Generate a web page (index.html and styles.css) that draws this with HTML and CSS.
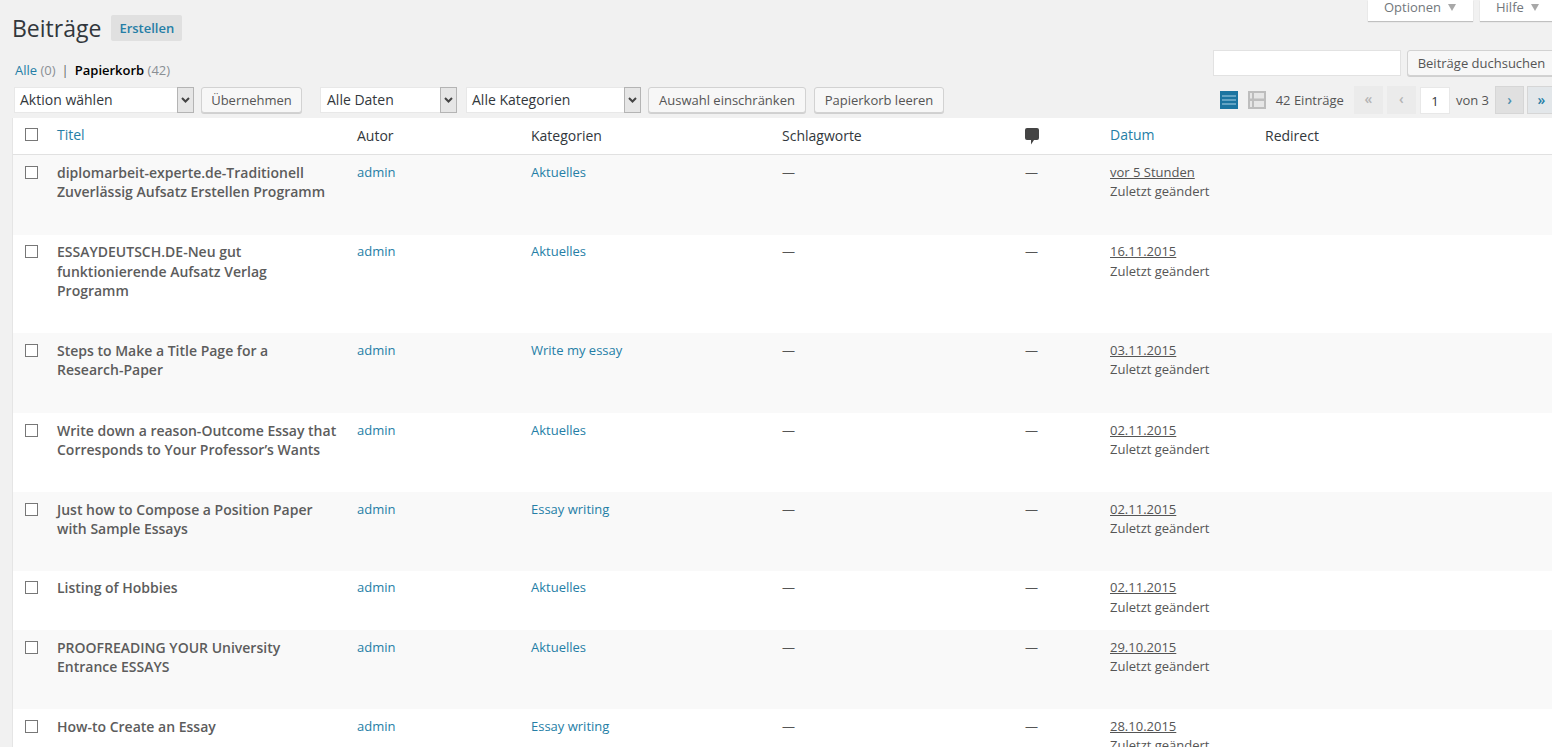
FILE: index.html
```html
<!DOCTYPE html>
<html lang="de">
<head>
    <meta charset="UTF-8">
    <meta name="viewport" content="width=device-width, initial-scale=1.0">
    <title>Beiträge</title>
    <link rel="stylesheet" href="styles.css">
</head>
<body>
    <div class="wrap">
        <div class="page-head">
            <div class="head-left">
                <div class="title-row">
                    <h1>Beiträge</h1>
                    <a class="add-new" href="#">Erstellen</a>
                </div>
                <ul class="subsubsub">
                    <li><a href="#">Alle</a> <span class="count">(0)</span></li>
                    <li class="sep">|</li>
                    <li class="current">Papierkorb <span class="count">(42)</span></li>
                </ul>
            </div>
            <div class="head-right">
                <div class="screen-meta">
                    <button class="meta-tab meta-options">Optionen <span class="caret"></span></button>
                    <button class="meta-tab meta-help">Hilfe <span class="caret"></span></button>
                </div>
                <div class="search-box">
                    <input class="search-input" type="text">
                    <button class="btn btn-search">Beiträge duchsuchen</button>
                </div>
            </div>
        </div>

        <div class="tablenav">
            <div class="select select-action">
                <span class="select-label">Aktion wählen</span>
                <span class="select-arrow"><svg width="9" height="6" viewBox="0 0 9 6"><path d="M1 1l3.500 3.500L8 1" fill="none" stroke="#444" stroke-width="2"/></svg></span>
            </div>
            <button class="btn btn-apply">Übernehmen</button>
            <div class="select select-date">
                <span class="select-label">Alle Daten</span>
                <span class="select-arrow"><svg width="9" height="6" viewBox="0 0 9 6"><path d="M1 1l3.500 3.500L8 1" fill="none" stroke="#444" stroke-width="2"/></svg></span>
            </div>
            <div class="select select-cat">
                <span class="select-label">Alle Kategorien</span>
                <span class="select-arrow"><svg width="9" height="6" viewBox="0 0 9 6"><path d="M1 1l3.500 3.500L8 1" fill="none" stroke="#444" stroke-width="2"/></svg></span>
            </div>
            <button class="btn btn-filter">Auswahl einschränken</button>
            <button class="btn btn-empty">Papierkorb leeren</button>

            <div class="pagination">
                <svg class="view-icon" width="18" height="18" viewBox="0 0 18 18"><path fill="#1b74a0" d="M0 0h18v18H0z"/><path fill="#a9d2e6" d="M2 4.500h14v1H2zM2 8.500h14v1H2zM2 12.500h14v1H2z"/></svg>
                <svg class="view-icon view-excerpt" width="18" height="18" viewBox="0 0 18 18"><path fill="#bdbdbd" d="M0 0h18v18H0z"/><path fill="#e6e6e6" d="M6 2h10v5.500H6zM6 10h10v6H6zM2 2h2v5.500H2zM2 10h2v6H2z"/></svg>
                <span class="num-items">42 Einträge</span>
                <span class="page-btn page-off page-first">«</span>
                <span class="page-btn page-off page-prev">‹</span>
                <span class="page-current">1</span>
                <span class="page-total">von 3</span>
                <a class="page-btn page-next" href="#">›</a>
                <a class="page-btn page-last" href="#">»</a>
            </div>
        </div>

        <table class="posts">
            <colgroup>
                <col class="col-cb"><col class="col-title"><col class="col-author"><col class="col-cat">
                <col class="col-tags"><col class="col-comments"><col class="col-date"><col class="col-redirect">
            </colgroup>
            <thead>
                <tr>
                    <th class="cb"><input type="checkbox"></th>
                    <th><a href="#">Titel</a></th>
                    <th>Autor</th>
                    <th>Kategorien</th>
                    <th>Schlagworte</th>
                    <th><svg class="comment-icon" width="14" height="17" viewBox="0 0 14 17"><path fill="#444" d="M2 0h10a2 2 0 0 1 2 2v8a2 2 0 0 1-2 2H9l-3 4.500V12H2a2 2 0 0 1-2-2V2a2 2 0 0 1 2-2z"/></svg></th>
                    <th><a href="#">Datum</a></th>
                    <th>Redirect</th>
                </tr>
            </thead>
            <tbody>
                <tr class="alt row-pad">
                    <td class="cb"><input type="checkbox"></td>
                    <td><strong>diplomarbeit-experte.de-Traditionell Zuverlässig Aufsatz Erstellen Programm</strong><div class="row-actions">Wiederherstellen</div></td>
                    <td><a href="#">admin</a></td>
                    <td><a href="#">Aktuelles</a></td>
                    <td>—</td>
                    <td>—</td>
                    <td><abbr>vor 5 Stunden</abbr><br>Zuletzt geändert</td>
                    <td></td>
                </tr>
                <tr>
                    <td class="cb"><input type="checkbox"></td>
                    <td><strong>ESSAYDEUTSCH.DE-Neu gut funktionierende Aufsatz Verlag Programm</strong><div class="row-actions">Wiederherstellen</div></td>
                    <td><a href="#">admin</a></td>
                    <td><a href="#">Aktuelles</a></td>
                    <td>—</td>
                    <td>—</td>
                    <td><abbr>16.11.2015</abbr><br>Zuletzt geändert</td>
                    <td></td>
                </tr>
                <tr class="alt row-pad">
                    <td class="cb"><input type="checkbox"></td>
                    <td><strong>Steps to Make a Title Page for a Research-Paper</strong><div class="row-actions">Wiederherstellen</div></td>
                    <td><a href="#">admin</a></td>
                    <td><a href="#">Write my essay</a></td>
                    <td>—</td>
                    <td>—</td>
                    <td><abbr>03.11.2015</abbr><br>Zuletzt geändert</td>
                    <td></td>
                </tr>
                <tr>
                    <td class="cb"><input type="checkbox"></td>
                    <td><strong>Write down a reason-Outcome Essay that Corresponds to Your Professor’s Wants</strong><div class="row-actions">Wiederherstellen</div></td>
                    <td><a href="#">admin</a></td>
                    <td><a href="#">Aktuelles</a></td>
                    <td>—</td>
                    <td>—</td>
                    <td><abbr>02.11.2015</abbr><br>Zuletzt geändert</td>
                    <td></td>
                </tr>
                <tr class="alt">
                    <td class="cb"><input type="checkbox"></td>
                    <td><strong>Just how to Compose a Position Paper with Sample Essays</strong><div class="row-actions">Wiederherstellen</div></td>
                    <td><a href="#">admin</a></td>
                    <td><a href="#">Essay writing</a></td>
                    <td>—</td>
                    <td>—</td>
                    <td><abbr>02.11.2015</abbr><br>Zuletzt geändert</td>
                    <td></td>
                </tr>
                <tr>
                    <td class="cb"><input type="checkbox"></td>
                    <td><strong>Listing of Hobbies</strong><div class="row-actions">Wiederherstellen</div></td>
                    <td><a href="#">admin</a></td>
                    <td><a href="#">Aktuelles</a></td>
                    <td>—</td>
                    <td>—</td>
                    <td><abbr>02.11.2015</abbr><br>Zuletzt geändert</td>
                    <td></td>
                </tr>
                <tr class="alt">
                    <td class="cb"><input type="checkbox"></td>
                    <td><strong>PROOFREADING YOUR University Entrance ESSAYS</strong><div class="row-actions">Wiederherstellen</div></td>
                    <td><a href="#">admin</a></td>
                    <td><a href="#">Aktuelles</a></td>
                    <td>—</td>
                    <td>—</td>
                    <td><abbr>29.10.2015</abbr><br>Zuletzt geändert</td>
                    <td></td>
                </tr>
                <tr>
                    <td class="cb"><input type="checkbox"></td>
                    <td><strong>How-to Create an Essay</strong><div class="row-actions">Wiederherstellen</div></td>
                    <td><a href="#">admin</a></td>
                    <td><a href="#">Essay writing</a></td>
                    <td>—</td>
                    <td>—</td>
                    <td><abbr>28.10.2015</abbr><br>Zuletzt geändert</td>
                    <td></td>
                </tr>
            </tbody>
        </table>
    </div>
</body>
</html>
```

FILE: styles.css
```css
html, body {
    height: 100%;
    overflow: hidden;
}
body {
    margin: 0;
    background-color: #f1f1f1;
    color: #444;
    font-family: "Open Sans", "Liberation Sans", sans-serif;
    font-size: 13px;
}
a {
    color: #257ea6;
    text-decoration: none;
}
button {
    font-family: inherit;
}
.wrap {
    width: 1549px;
    padding-left: 13px;
}

/* head */
.page-head {
    display: flex;
    justify-content: space-between;
}
.title-row {
    display: flex;
    align-items: center;
    padding-top: 15px;
    height: 26px;
}
h1 {
    margin: 0 0 0 -1px;
    font-size: 23px;
    font-weight: 400;
    color: #32373c;
}
.add-new {
    margin-left: 10px;
    padding: 0 8px;
    height: 26px;
    line-height: 26px;
    width: 55px;
    background-color: #e0e0e0;
    border-radius: 2px;
    font-size: 13px;
    font-weight: 600;
}
.subsubsub {
    display: flex;
    gap: 6px;
    margin: 20px 0 0 2px;
    padding: 0;
    list-style: none;
    line-height: 18px;
    color: #666;
}
.subsubsub .count {
    color: #8a8f94;
}
.subsubsub .current {
    color: #000;
    font-weight: 600;
}
.subsubsub .current .count {
    font-weight: 400;
}
.head-right {
    display: flex;
    flex-direction: column;
    align-items: flex-end;
}
.screen-meta {
    display: flex;
    gap: 7px;
    height: 21px;
}
.meta-tab {
    height: 21px;
    border: none;
    background-color: #fff;
    box-shadow: 0 1px 1px rgba(0,0,0,0.2);
    color: #72777c;
    font-size: 13px;
    padding: 0 0 7px 16px;
    line-height: 14px;
    text-align: left;
}
.meta-options {
    width: 105px;
}
.meta-help {
    width: 82px;
}
.caret {
    display: inline-block;
    margin-left: 4px;
    border-left: 4px solid transparent;
    border-right: 4px solid transparent;
    border-top: 7px solid #a8a8a8;
    vertical-align: 1px;
}
.search-box {
    display: flex;
    gap: 6px;
    margin-top: 29px;
}
.search-input {
    box-sizing: border-box;
    width: 188px;
    height: 26px;
    margin: 0;
    border: 1px solid #e2e2e2;
    background-color: #fff;
}

/* buttons and selects */
.btn {
    box-sizing: border-box;
    height: 26px;
    padding: 0;
    border: 1px solid #d2d2d2;
    border-radius: 3px;
    background-color: #f7f7f7;
    box-shadow: 0 1px 0 #d0d0d0;
    color: #555;
    font-size: 13px;
    text-align: center;
}
.btn-search {
    width: 155px;
    padding-right: 6px;
}
.btn-apply {
    width: 101px;
    margin-left: 7px;
}
.btn-filter {
    width: 158px;
    margin-left: 7px;
}
.btn-empty {
    width: 130px;
    margin-left: 8px;
}
.tablenav {
    display: flex;
    align-items: center;
    height: 26px;
    margin-top: 8px;
    padding-left: 1px;
}
.select {
    box-sizing: border-box;
    display: flex;
    justify-content: space-between;
    height: 26px;
    border: 1px solid #e8e8e8;
    background-color: #fff;
    font-size: 14px;
    line-height: 24px;
    color: #32373c;
}
.select-label {
    padding-left: 5px;
}
.select-date .select-label {
    padding-left: 6px;
}
.select-arrow {
    box-sizing: border-box;
    display: flex;
    align-items: center;
    justify-content: center;
    width: 17px;
    margin: -1px -1px -1px 0;
    border: 1px solid #b4b4b4;
    background-color: #e6e6e6;
}
.select-action {
    width: 180px;
}
.select-date {
    width: 137px;
    margin-left: 18px;
}
.select-cat {
    width: 175px;
    margin-left: 9px;
}
.pagination {
    display: flex;
    align-items: center;
    margin-left: auto;
    height: 30px;
    color: #555;
}
.view-excerpt {
    margin-left: 10px;
}
.num-items {
    margin-left: 10px;
    margin-right: 10px;
}
.page-btn {
    box-sizing: border-box;
    width: 29px;
    height: 28px;
    line-height: 26px;
    text-align: center;
    font-size: 14px;
    font-weight: 600;
    background-color: #e0e0e0;
    margin-right: 4px;
}
.page-off {
    background-color: #ebebeb;
    color: #b4b4b4;
}
.page-next {
    margin-right: 3px;
    border: 1px solid #d6d6d6;
    color: #4d8fae;
}
.page-last {
    margin-right: 6px;
    border: 1px solid #d6d6d6;
    background-color: #e3e7ea;
}
.page-current {
    box-sizing: border-box;
    width: 30px;
    height: 27px;
    line-height: 27px;
    text-align: center;
    background-color: #fff;
    border: 1px solid #e8e8e8;
    color: #32373c;
}
.page-total {
    margin: 0 6px;
}

/* table */
.posts {
    width: 1549px;
    margin-top: 5px;
    table-layout: fixed;
    border-collapse: collapse;
    background-color: #fff;
    box-shadow: -1px 0 0 #e5e5e5;
}
.col-cb { width: 34px; }
.col-title { width: 300px; }
.col-author { width: 174px; }
.col-cat { width: 251px; }
.col-tags { width: 243px; }
.col-comments { width: 85px; }
.col-date { width: 155px; }
.posts th {
    height: 34px;
    padding: 0 10px 2px;
    border-bottom: 1px solid #e1e1e1;
    text-align: left;
    font-size: 14px;
    font-weight: 400;
    color: #32373c;
}
.posts th a {
    display: inline-block;
    padding-bottom: 2px;
}
.posts td {
    padding: 7.500px 10px 12.900px;
    vertical-align: top;
    font-size: 13px;
    line-height: 19.500px;
    color: #555;
}
.posts tr.row-pad td {
    padding-bottom: 13.900px;
}
.posts td strong {
    display: block;
    font-size: 14px;
    font-weight: 600;
    color: #5c5c5c;
}
.posts .cb {
    padding-right: 0;
    padding-left: 12px;
}
.posts th.cb {
    height: 32px;
    padding-bottom: 4px;
}
.posts input[type="checkbox"] {
    appearance: none;
    display: block;
    box-sizing: border-box;
    width: 13px;
    height: 13px;
    margin: 0;
    border: 1px solid #777;
    background-color: #fff;
}
.posts td input[type="checkbox"] {
    margin-top: 3px;
}
.posts tr.alt td {
    background-color: #f9f9f9;
}
.row-actions {
    visibility: hidden;
}
.comment-icon {
    display: block;
    margin-top: 3px;
}
abbr {
    text-decoration: underline;
}
```
